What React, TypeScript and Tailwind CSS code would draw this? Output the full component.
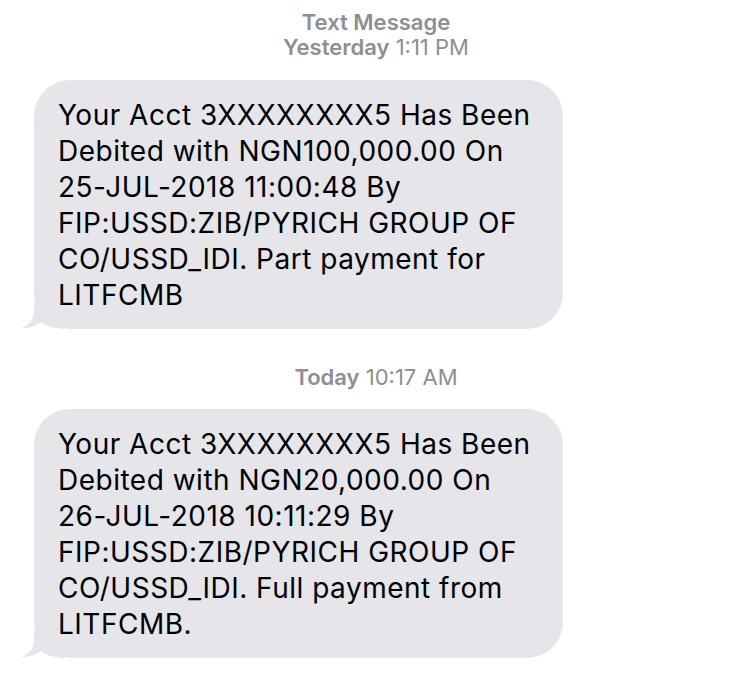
import React from 'react';

const Tail = () => (
  <svg
    className="absolute left-[-14px] bottom-0"
    width="44"
    height="26"
    viewBox="0 0 44 26"
  >
    <path
      d="M14,0 L14,8 C14,16 10,22 1,25 C8,25.5 15,23 21,19 C26,23 32,25 44,26 L44,0 Z"
      fill="#e5e5ea"
    />
  </svg>
);

const Bubble = ({ lines }: { lines: string[] }) => (
  <div className="relative ml-[34px] w-[529px]">
    <div className="relative z-10 rounded-[36px] bg-[#e5e5ea] pl-[24px] pr-4 pt-[17px] pb-[16px] text-[28px] leading-[36px] tracking-[0.5px] text-black">
      {lines.map((l, i) => (
        <div key={i} className="whitespace-nowrap">{l}</div>
      ))}
    </div>
    <Tail />
  </div>
);

const Stamp = ({ bold, light }: { bold: string; light: string }) => (
  <div className="text-center text-[22px] leading-[25px] text-[#8e8e93]">
    <span className="font-semibold">{bold}</span> {light}
  </div>
);

const App = () => {
  return (
    <div
      className="min-h-screen w-[744px] bg-white"
      style={{ fontFamily: 'Inter, "Noto Sans", sans-serif' }}
    >
      <div className="pt-[10px] pl-[8px]">
        <div className="text-center text-[22px] leading-[25px] font-semibold text-[#8e8e93]">
          Text Message
        </div>
        <Stamp bold="Yesterday" light="1:11 PM" />
      </div>
      <div className="mt-[20px]">
        <Bubble
          lines={[
            'Your Acct 3XXXXXXXX5 Has Been',
            'Debited with NGN100,000.00 On',
            '25-JUL-2018 11:00:48 By',
            'FIP:USSD:ZIB/PYRICH GROUP OF',
            'CO/USSD_IDI. Part payment for',
            'LITFCMB',
          ]}
        />
      </div>
      <div className="mt-[36px] pl-[8px]">
        <Stamp bold="Today" light="10:17 AM" />
      </div>
      <div className="mt-[19px]">
        <Bubble
          lines={[
            'Your Acct 3XXXXXXXX5 Has Been',
            'Debited with NGN20,000.00 On',
            '26-JUL-2018 10:11:29 By',
            'FIP:USSD:ZIB/PYRICH GROUP OF',
            'CO/USSD_IDI. Full payment from',
            'LITFCMB.',
          ]}
        />
      </div>
    </div>
  );
};

export default App;
